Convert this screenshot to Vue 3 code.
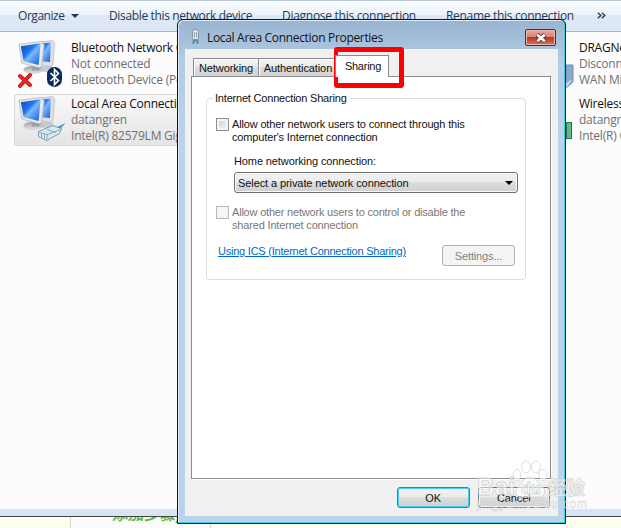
<script setup>
const commands = [
  { label: 'Disable this network device', cls: 'disable' },
  { label: 'Diagnose this connection', cls: 'diagnose' },
  { label: 'Rename this connection', cls: 'rename' }
]
const connections = [
  { name: 'Bluetooth Network Connection', status: 'Not connected', device: 'Bluetooth Device (Personal Area)', kind: 'bluetooth' },
  { name: 'Local Area Connection', status: 'datangren', device: 'Intel(R) 82579LM Gigabit', kind: 'lan' }
]
const others = [
  { name: 'DRAGNet', status: 'Disconnected', device: 'WAN Miniport' },
  { name: 'Wireless Network', status: 'datangren', device: 'Intel(R) Centrino' }
]
</script>

<template>
  <div class="screen">
    <nav class="toolbar">
      <span class="organize">Organize</span><i class="caret"></i>
      <span v-for="c in commands" :key="c.cls" :class="c.cls">{{ c.label }}</span>
      <svg class="more" width="9" height="7" viewBox="0 0 9 7"><path d="m.8.8 3 2.7-3 2.7M4.8.8l3 2.7-3 2.7" fill="none" stroke="#1e395b" stroke-width="1.4" /></svg>
    </nav>

    <main class="explorer">
      <section class="left-list">
        <article v-for="c in connections" :key="c.name" class="connection" :class="{ selected: c.kind === 'lan' }">
          <svg class="pc" width="53" height="50" viewBox="0 0 53 50">
            <defs>
              <linearGradient :id="'scr' + c.kind" x1="0" y1="0" x2="1" y2="1">
                <stop offset="0" stop-color="#0a48bd" /><stop offset=".4" stop-color="#2277ef" />
                <stop offset=".52" stop-color="#7bb9fb" /><stop offset="1" stop-color="#145de0" />
              </linearGradient>
              <linearGradient :id="'base' + c.kind" x1="0" y1="0" x2="0" y2="1">
                <stop offset="0" stop-color="#9a9fa5" /><stop offset="1" stop-color="#e3e5e7" />
              </linearGradient>
            </defs>
            <g transform="translate(0 .5) scale(.94)">
              <ellipse cx="30" cy="30" rx="8" ry="3.5" fill="#c9cccf" />
              <path d="M14 3 37 0 39 3 37 26 34 28 22 25z" fill="#dfe1e2" stroke="#aeb1b4" stroke-width=".7" />
              <path d="M20 4 35 2 34 23 23 22z" :fill="`url(#scr${c.kind})`" />
              <ellipse cx="16" cy="31" rx="10" ry="4" :fill="`url(#base${c.kind})`" stroke="#b6b9bc" stroke-width=".5" />
              <path d="M14 25h8l1 7h-8z" fill="#999fa6" />
              <path d="M1 4 25 1 28 5 25 28 22 29 4 24z" fill="#e8e9e8" stroke="#a9acaf" stroke-width=".7" />
              <path d="M3 6 24 3 22 26 6 22z" :fill="`url(#scr${c.kind})`" />
            </g>
            <template v-if="c.kind === 'bluetooth'">
              <path d="m2 36 10 9M12 35 2 46" stroke="#a91010" stroke-width="3.8" stroke-linecap="round" />
              <path d="m2 36 10 9M12 35 2 46" stroke="#f42424" stroke-width="2.6" stroke-linecap="round" />
              <rect x="29" y="27" width="15" height="20" rx="7.3" fill="#082b60" />
              <path d="m32.5 33 8 7.5-4 4V29.5l4 4-8 7.5" fill="none" stroke="#fff" stroke-width="1.6" />
            </template>
            <g v-else transform="translate(-.5 -2.5)">
              <path d="m35 36 11-5 1-1-5 6-7 5z" fill="#35a9d8" stroke="#2378a3" stroke-width=".6" />
              <path d="m21 38 14-6 9 3-2 5-13 7-8-4z" fill="#d7e9f2" stroke="#67889d" stroke-width=".8" />
              <path d="m22 39 8 2 13-5M30 41l-1 5m-5-6v4m3-3v4m3-9 8 3" fill="none" stroke="#7596a9" stroke-width=".8" />
            </g>
          </svg>
          <div class="connection-copy"><b>{{ c.name }}</b><span>{{ c.status }}</span><span>{{ c.device }}</span></div>
        </article>
      </section>
      <section class="right-list">
        <article v-for="(c, i) in others" :key="c.name" class="remote">
          <svg v-if="i === 0" width="10" height="52"><path d="M0 26h7v17l-7 6z" fill="#8baac7" stroke="#6990b7" /><path d="m0 44 7-4-7 9" fill="#c6d8e8" /></svg>
          <svg v-else width="10" height="52"><rect x=".5" y="27.5" width="5" height="16" fill="#62b786" stroke="#237848" /></svg>
          <div class="connection-copy"><b>{{ c.name }}</b><span>{{ c.status }}</span><span>{{ c.device }}</span></div>
        </article>
      </section>
    </main>
    <div class="window-edge"></div>
    <footer class="page-behind"><div class="paper"><span>· 添加步骤/方</span></div></footer>

    <section class="dialog">
      <header class="titlebar">
        <svg width="10" height="17" viewBox="0 0 10 17"><rect x="1.5" y=".7" width="6" height="10" rx="1.5" fill="#d9e4ed" stroke="#8796a3" /><path d="M3.5 3v5m2-5v5" stroke="#9ba6ae" /><path d="M2.5 11v4m4-4v4" stroke="#159bc2" stroke-width="1.6" /><path d="M3 10h3v3H3z" fill="#7d909f" /></svg>
        <h1>Local Area Connection Properties</h1>
        <button class="close" aria-label="Close"><svg width="12" height="10" viewBox="0 0 12 10"><path d="m2 1.5 8 7m0-7-8 7" stroke="#5f3d43" stroke-width="4.4" /><path d="m2.3 1.8 7.4 6.4m0-6.4L2.3 8.2" stroke="#fff" stroke-width="2.5" /></svg></button>
      </header>
      <div class="client">
        <div class="tabs">
          <div class="tab networking"><span>Networking</span></div>
          <div class="tab authentication"><span>Authentication</span></div>
          <div class="tab sharing"><span>Sharing</span></div>
        </div>
        <div class="tab-panel">
          <fieldset>
            <legend>Internet Connection Sharing</legend>
            <label class="option"><i class="checkbox"></i><span><em class="w1">Allow other network users to connect through this</em><em class="w2">computer's Internet connection</em></span></label>
            <div class="home-label">Home networking connection:</div>
            <div class="select"><span>Select a private network connection</span><i></i></div>
            <label class="option disabled"><i class="checkbox"></i><span><em class="w3">Allow other network users to control or disable the</em><em class="w4">shared Internet connection</em></span></label>
            <div class="link-row"><a>Using ICS (Internet Connection Sharing)</a><button class="settings">Settings...</button></div>
          </fieldset>
        </div>
        <div class="actions"><button class="ok">OK</button><button class="cancel">Cancel</button></div>
      </div>
    </section>
    <div class="highlight"></div>
    <svg class="watermark" width="150" height="66" viewBox="0 0 150 66">
      <g fill="#fff" fill-opacity=".6" stroke="#c4c4c4" stroke-opacity=".7" stroke-width=".8">
        <ellipse cx="46" cy="24" rx="4" ry="5.5" /><ellipse cx="55" cy="16" rx="4.5" ry="6" /><ellipse cx="65" cy="16" rx="4.5" ry="6" /><ellipse cx="72" cy="24" rx="4" ry="5.5" />
        <path d="M59 26c-6 0-7 5-11 9-6 5-3 12 4 11h14c8 1 10-6 5-11-5-4-6-9-12-9z" />
        <g><text x="6" y="44" font-size="24" font-weight="700" textLength="38" lengthAdjust="spacingAndGlyphs">Bai</text><text x="50" y="43" font-size="16" font-weight="700">du</text><text x="77" y="44" font-size="19" font-weight="700" textLength="37" class="cjk">经验</text><text x="6" y="57" font-size="12" textLength="110" stroke-width=".5">jingyan.baidu.com</text></g>
      </g>
    </svg>
  </div>
</template>

<style>
body { margin: 0; overflow: hidden; }
</style>
<style scoped>
* { box-sizing: border-box; }
.screen { position: relative; width: 621px; height: 528px; overflow: hidden; background: #fcfcfc; font-family: "Open Sans", "Noto Sans", sans-serif; font-size: 12px; }
.toolbar { height: 32px; border-top: 1px solid #b8c5d5; border-bottom: 1px solid #a5b5cc; background: linear-gradient(#fafcfe 0, #edf3fb 45%, #dfe8f5 46%, #dce6f4); color: #1e395b; display: flex; padding-left: 18px; line-height: 30px; white-space: nowrap; }
.organize { width: 47px; letter-spacing: -.45px; }
.caret { width: 0; height: 0; border: 4px solid transparent; border-top-color: #1e395b; border-bottom: 0; margin: 13px 30px 0 6px; }
.disable { width: 173px; letter-spacing: -.35px; }
.diagnose { width: 164px; letter-spacing: -.28px; }
.rename { width: 151px; letter-spacing: -.31px; }
.more { margin-top: 11px; }
.explorer { height: 477px; display: flex; justify-content: space-between; }
.left-list { width: 178px; padding: 6px 0 0 14px; overflow: hidden; }
.connection { height: 52px; display: flex; margin-bottom: 4px; padding-left: 3px; border: 1px solid transparent; }
.selected { border-color: #d9d9d9; border-right: 0; border-radius: 3px 0 0 3px; background: linear-gradient(#f8f8f8, #e5e5e5); }
.pc { flex: 0 0 53px; margin-top: 1px; }
.connection-copy { display: flex; flex-direction: column; padding-top: 1px; line-height: 16px; white-space: nowrap; color: #707070; letter-spacing: -.22px; }
.connection-copy b { color: #111; font-weight: 400; letter-spacing: -.25px; }
.right-list { width: 55px; padding-top: 7px; overflow: hidden; }
.remote { height: 56px; display: flex; }
.remote svg { flex: 0 0 13px; }
.window-edge { height: 8px; background: #d7e4f1; border-bottom: 1px solid #454545; }
.page-behind { height: 11px; background: #fffff0; padding-left: 70px; }
.paper { width: 141px; height: 11px; background: #fcfcfc; border: 1px solid #d6d6d6; border-width: 0 1px; overflow: hidden; }
.paper span { display: block; margin: -13px 0 0 21px; font: italic bold 16px/18px "Noto Sans CJK SC", sans-serif; color: #60bd43; white-space: nowrap; }
.dialog { position: absolute; left: 177px; top: 19px; width: 389px; height: 505px; border: 1px solid #10161d; border-radius: 6px 6px 0 0; box-shadow: inset -1px -1px #35d4ee, inset 1px 1px #dcebf8; background: linear-gradient(#99b4d1 0, #b2cbe6 40px, #bad2eb 120px); padding: 0 7px; font-family: "Liberation Sans", sans-serif; font-size: 11px; color: #111; }
.titlebar { height: 29px; display: flex; padding: 9px 0 0 6px; }
h1 { margin: -1px 0 0 6px; width: 318px; font: 12px/19px "Open Sans", sans-serif; letter-spacing: -.32px; color: #111; }
.close { width: 31px; height: 17px; border: 1px solid #512c36; border-radius: 2px; padding: 0; background: linear-gradient(#e8a79c, #d78476 48%, #b93724 50%, #d27662); box-shadow: inset 0 0 0 1px #edb5a8; display: flex; align-items: center; justify-content: center; }
.client { height: 467px; background: #f0f0f0; padding: 6px 8px 0 6px; }
.tabs { height: 21px; display: flex; align-items: flex-end; padding-left: 2px; }
.tab { height: 18px; border: 1px solid #898c95; border-bottom: 0; background: linear-gradient(#f3f3f3, #ebebeb 48%, #dddddd 50%, #d4d4d4); text-align: center; line-height: 19px; white-space: nowrap; box-shadow: inset 1px 1px #fff; letter-spacing: -.1px; }
.networking { width: 66px; }
.authentication { width: 76px; border-left: 0; padding-left: 3px; }
.sharing { height: 22px; width: 54px; background: #fff; line-height: 21px; margin-bottom: -1px; z-index: 1; padding-left: 2px; letter-spacing: -.25px; }
.tab-panel { width: 360px; height: 403px; background: #fff; border: 1px solid #898c95; box-shadow: 1px 1px #fff; padding: 15px 24px 0 14px; }
fieldset { margin: 0; width: 320px; height: 188px; border: 1px solid #d5dfe5; border-radius: 4px; padding: 12px 7px 0 9px; }
legend { line-height: 13px; margin-left: -3px; padding: 0 3px 0 2px; letter-spacing: -.2px; }
.option { display: flex; line-height: 13px; }
.option > span { padding-top: 1px; }
.checkbox { width: 13px; height: 13px; border: 1px solid #8e8f8f; background: linear-gradient(135deg, #c9ced3, #f7f7f7); box-shadow: inset 0 0 0 2px #f4f4f4; margin: 1px 3px 0 0; }
.option em { display: block; font-style: normal; white-space: nowrap; }
.w1 { letter-spacing: -.155px; }
.w2 { letter-spacing: -.15px; }
.w3 { letter-spacing: -.2px; }
.w4 { letter-spacing: -.17px; }
.home-label { margin: 10px 0 3px 18px; line-height: 15px; letter-spacing: -.11px; }
.select { margin-left: 18px; width: 284px; height: 21px; border: 1px solid #707070; border-radius: 3px; background: linear-gradient(#f2f2f2, #ebebeb 48%, #dddddd 50%, #cfcfcf); box-shadow: inset 0 0 0 1px #fafafa; display: flex; justify-content: space-between; align-items: center; padding: 0 4px 0 3px; letter-spacing: -.09px; }
.select i { border: 4px solid transparent; border-top-color: #000; border-bottom: 0; }
.disabled { color: #777; margin-top: 13px; }
.disabled > span { padding-top: 0; }
.disabled .checkbox { border-color: #b9b9b9; background: #f7f7f7; margin-top: 0; }
.link-row { display: flex; justify-content: space-between; padding: 13px 3px 0 2px; }
a { color: #0066cc; text-decoration: underline; line-height: 13px; white-space: nowrap; letter-spacing: -.23px; }
button { font: 11px "Liberation Sans", sans-serif; color: #111; }
.settings { width: 73px; height: 21px; border: 1px solid #adb2b5; border-radius: 3px; background: #f4f4f4; color: #838383; padding: 0; letter-spacing: -.15px; }
.actions { display: flex; gap: 8px; padding: 8px 0 0 206px; }
.actions button { width: 73px; height: 21px; border: 1px solid #707070; border-radius: 3px; background: linear-gradient(#f2f2f2, #ebebeb 48%, #dddddd 50%, #cfcfcf); padding: 0; box-shadow: inset 0 0 0 1px #fafafa; }
.actions .ok { border-color: #3c7fb1; box-shadow: inset 0 0 0 1px #48cfee; }
.actions .cancel { letter-spacing: -.1px; }
.highlight { position: absolute; left: 334px; top: 47px; width: 70px; height: 41px; border: 5px solid #f00; border-left-width: 4px; border-radius: 3px; }
.watermark { position: absolute; left: 471px; top: 451px; font-family: "Liberation Sans", sans-serif; pointer-events: none; }
.cjk { font-family: "Noto Sans CJK SC", sans-serif; }
</style>
